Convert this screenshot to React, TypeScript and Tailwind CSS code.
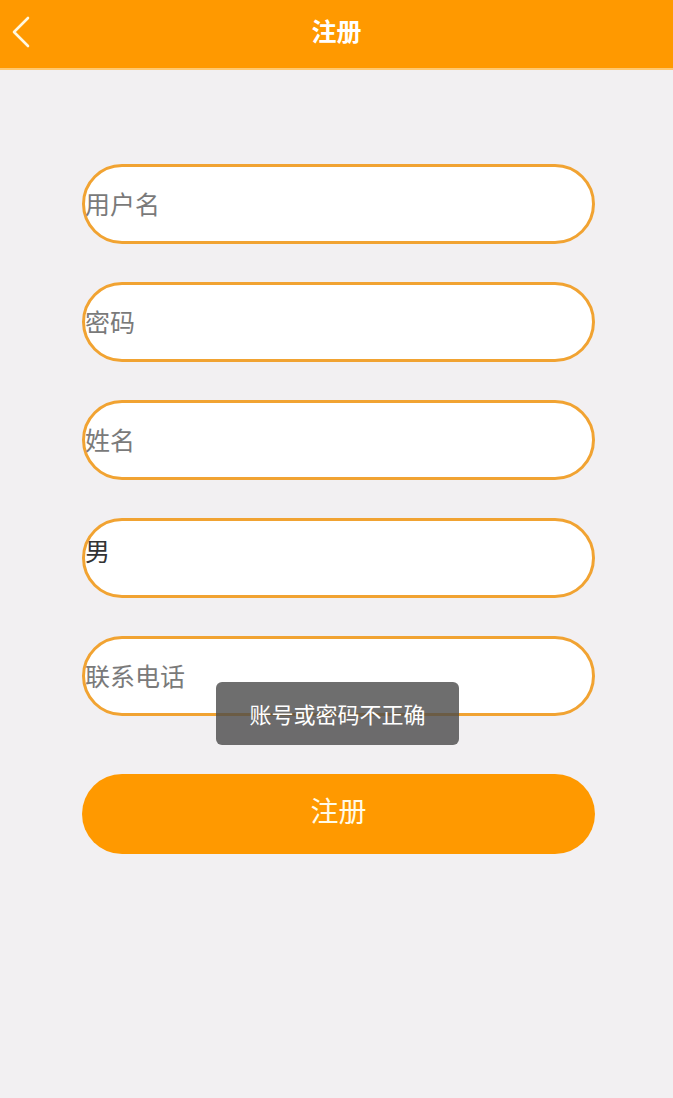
const font = { fontFamily: '"Noto Sans CJK SC", "Liberation Sans", sans-serif' };

const fields = [
  { label: "用户名", value: false },
  { label: "密码", value: false },
  { label: "姓名", value: false },
  { label: "男", value: true },
  { label: "联系电话", value: false },
];

export default function App() {
  return (
    <div className="relative min-h-[1098px] w-full bg-[#f2f0f2]" style={font}>
      <header className="relative flex h-[70px] items-center justify-center border-b-2 border-[#ffc870] bg-[#ff9900] pb-[6px]">
        <button className="absolute left-[10px] top-[16px] text-white">
          <svg width="22" height="32" viewBox="0 0 22 32" fill="none">
            <path d="M18 2 L4 16 L18 30" stroke="#fff8e0" strokeWidth="2.6" strokeLinecap="round" strokeLinejoin="round" />
          </svg>
        </button>
        <h1 className="text-[25px] font-bold text-white">注册</h1>
      </header>

      <div className="flex flex-col gap-[38px] pl-[82px] pr-[78px] pt-[94px]">
        {fields.map((f) => (
          <div
            key={f.label}
            className={`flex h-[80px] rounded-full border-[3px] border-[#f1a332] bg-white ${f.value ? "items-start pt-[11px]" : "items-center"}`}
          >
            <span className={`text-[25px] ${f.value ? "text-[#333]" : "text-[#7a7a7a]"}`}>{f.label}</span>
          </div>
        ))}
        <button className="mt-[20px] flex h-[80px] items-center justify-center rounded-full bg-[#ff9900] pb-[8px] text-[28px] text-[#fffbe8]">
          注册
        </button>
      </div>

      <div className="absolute left-[216px] top-[682px] flex h-[63px] w-[243px] items-center justify-center rounded-md bg-[#4a4a4a]/80 text-[22px] text-white">
        账号或密码不正确
      </div>
    </div>
  );
}
